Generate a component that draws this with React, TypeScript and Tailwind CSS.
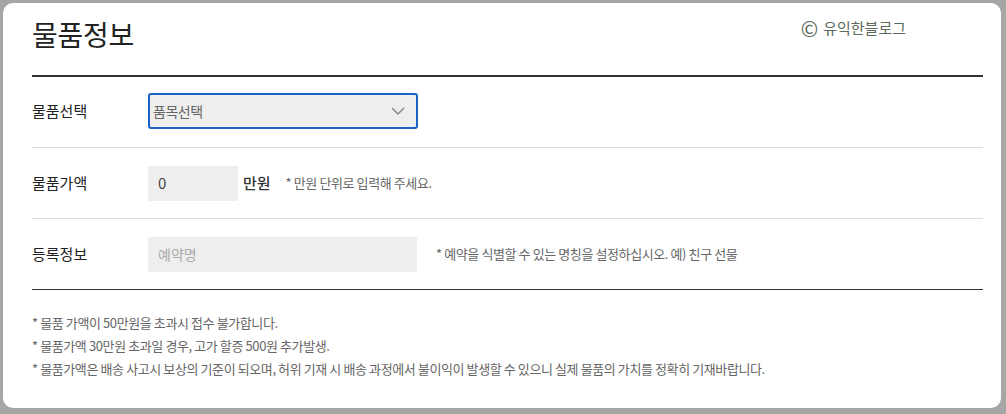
import React from "react";

const font = { fontFamily: '"Noto Sans CJK KR", "Noto Sans", sans-serif' };

export default function App() {
  return (
    <div className="w-[1006px] h-[414px] bg-[#a6a6a6] pt-[3px] pl-[3px] pr-[5px] pb-[6px]" style={font}>
      <div className="w-full h-full bg-white rounded-[10px] pl-[29px] pr-[18px] pt-[10px]">
        <div className="flex items-start justify-between h-[64px] border-b-2 border-[#333]">
          <h1 className="text-[28px] leading-[42px] text-[#222] font-normal tracking-[-0.3px]">물품정보</h1>
          <div className="flex items-center text-[15px] leading-[20px] text-[#5b6b5b] mt-[5px] mr-[77px]">
            <span className="text-[21px] leading-[20px] mr-[5px]">©</span>
            <span>유익한블로그</span>
          </div>
        </div>
        <div className="flex items-center h-[71px] pb-[2px] border-b border-[#dedede]">
          <div className="w-[116px] text-[15px] text-[#222] font-normal">물품선택</div>
          <div className="w-[270px] h-[36px] bg-[#eeeeee] border-2 border-[#1c63c7] rounded-[3px] flex items-center justify-between pl-[3px] pr-[10px]">
            <span className="text-[14px] text-[#666] tracking-[-0.5px]">품목선택</span>
            <svg width="16" height="10" viewBox="0 0 16 10" fill="none" stroke="#888" strokeWidth="1.5">
              <path d="M2 2 L8 8 L14 2" />
            </svg>
          </div>
        </div>
        <div className="flex items-center h-[71px] border-b border-[#dedede]">
          <div className="w-[116px] text-[15px] text-[#222] font-normal">물품가액</div>
          <div className="w-[90px] h-[35px] bg-[#eeeeee] flex items-center pl-[10px] text-[15px] text-[#444]">0</div>
          <span className="ml-[5px] text-[15px] text-[#333] font-medium">만원</span>
          <span className="ml-[15px] text-[13px] text-[#666] tracking-[-0.4px]">* 만원 단위로 입력해 주세요.</span>
        </div>
        <div className="flex items-center h-[71px] border-b border-[#333]">
          <div className="w-[116px] text-[15px] text-[#222] font-normal">등록정보</div>
          <div className="w-[269px] h-[35px] bg-[#eeeeee] flex items-center pl-[10px] text-[14px] text-[#aaa]">예약명</div>
          <span className="ml-[19px] text-[13px] text-[#666] tracking-[-0.4px]">* 예약을 식별할 수 있는 명칭을 설정하십시오. 예) 친구 선물</span>
        </div>
        <div className="pt-[24px] flex flex-col gap-[5px] text-[13px] leading-[18px] text-[#666] tracking-[-0.4px]">
          <p>* 물품 가액이 50만원을 초과시 접수 불가합니다.</p>
          <p>* 물품가액 30만원 초과일 경우, 고가 할증 500원 추가발생.</p>
          <p>* 물품가액은 배송 사고시 보상의 기준이 되오며, 허위 기재 시 배송 과정에서 불이익이 발생할 수 있으니 실제 물품의 가치를 정확히 기재바랍니다.</p>
        </div>
      </div>
    </div>
  );
}
